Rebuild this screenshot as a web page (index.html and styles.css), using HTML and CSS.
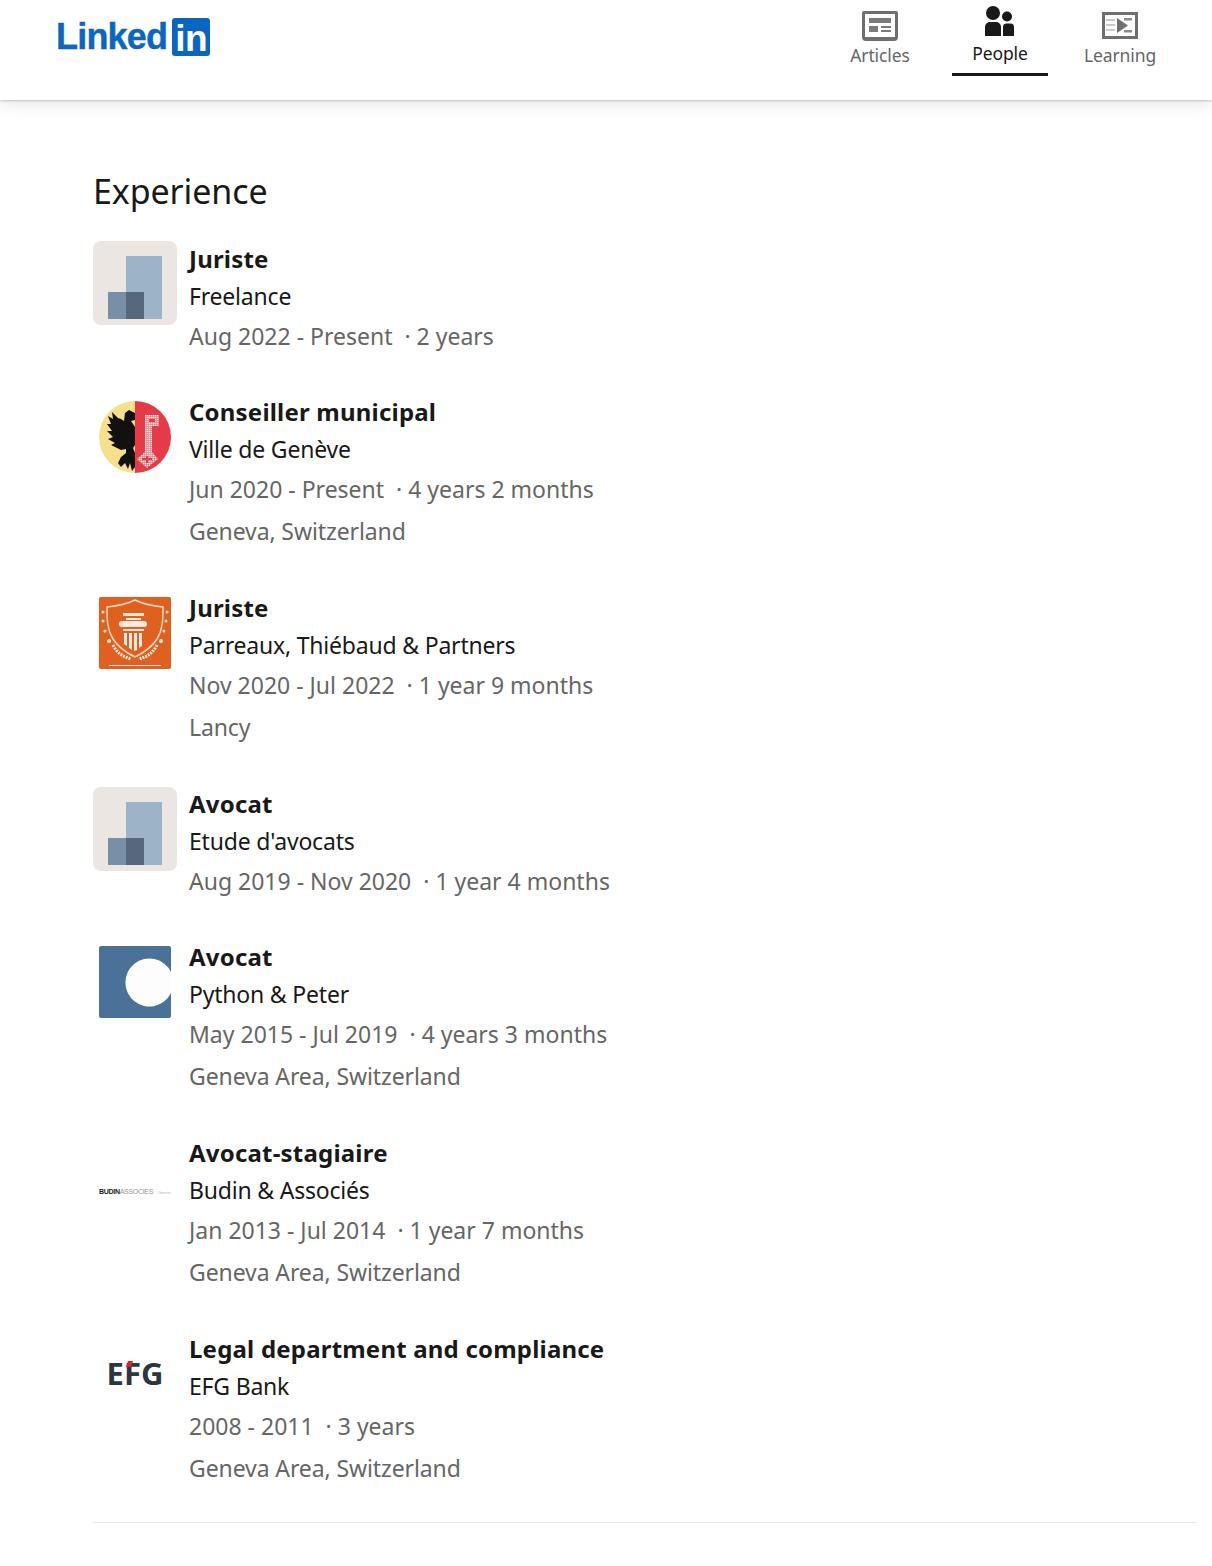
FILE: index.html
```html
<!DOCTYPE html>
<html lang="en">
<head>
  <meta charset="UTF-8">
  <meta name="viewport" content="width=device-width, initial-scale=1.0">
  <title>Experience | LinkedIn</title>
  <link rel="stylesheet" href="styles.css">
</head>
<body>
  <!-- Top nav -->
  <header class="top-bar">
    <a class="brand" href="#">
      <span class="brand-word">Linked</span><span class="brand-box">in</span>
    </a>
    <nav class="top-nav">
      <a class="nav-item" href="#">
        <svg class="nav-icon icon-articles" width="36" height="30" viewBox="0 0 36 30">
          <path fill="#6f6f6f" d="M2 0h32a2 2 0 0 1 2 2v24a4 4 0 0 1-4 4H4a4 4 0 0 1-4-4V2a2 2 0 0 1 2-2z"/>
          <rect x="3" y="3" width="30" height="23" fill="#fff"/>
          <rect x="7" y="7" width="22" height="5" fill="#7a7a7a"/>
          <rect x="7" y="15" width="9" height="6" fill="#7a7a7a"/>
          <rect x="19" y="15" width="10" height="2" fill="#7a7a7a"/>
          <rect x="19" y="19" width="10" height="2" fill="#7a7a7a"/>
        </svg>
        <span>Articles</span>
      </a>
      <a class="nav-item active" href="#">
        <svg class="nav-icon icon-people" width="30" height="30" viewBox="0 0 30 30">
          <circle cx="8" cy="7" r="7" fill="#191919"/>
          <circle cx="22" cy="10.500" r="5" fill="#191919"/>
          <path fill="#191919" d="M0 30V21a5 5 0 0 1 5-5h6a5 5 0 0 1 5 5v9z"/>
          <path fill="#191919" d="M18 30V21a3.500 3.500 0 0 1 3.500-3.500h4A3.500 3.500 0 0 1 29 21v9z"/>
        </svg>
        <span>People</span>
      </a>
      <a class="nav-item" href="#">
        <svg class="nav-icon icon-learning" width="36" height="27" viewBox="0 0 36 27">
          <rect width="36" height="27" fill="#6f6f6f"/>
          <rect x="3" y="3" width="30" height="21" fill="#fff"/>
          <rect x="4" y="7" width="9" height="2" fill="#c9c9c9"/>
          <rect x="4" y="12" width="9" height="2" fill="#c9c9c9"/>
          <rect x="4" y="17" width="9" height="2" fill="#c9c9c9"/>
          <rect x="22" y="6" width="8" height="2.500" fill="#8a8a8a"/>
          <rect x="22" y="18" width="8" height="2.500" fill="#8a8a8a"/>
          <path fill="#6f6f6f" d="M15 6l11 7.500L15 21z"/>
        </svg>
        <span>Learning</span>
      </a>
    </nav>
  </header>

  <main class="content">
    <h2 class="section-title">Experience</h2>

    <!-- Experience list -->
    <ul class="exp-list">
      <li class="exp-item">
        <div class="logo-slot">
          <svg class="logo-placeholder" width="84" height="84" viewBox="0 0 84 84">
            <rect width="84" height="84" rx="8" fill="#ebe6e1"/>
            <rect x="33" y="15" width="36" height="63" fill="#9db3c8"/>
            <rect x="15" y="51" width="36" height="27" fill="#788fa8"/>
            <rect x="33" y="51" width="18" height="27" fill="#56687c"/>
          </svg>
        </div>
        <div class="exp-text">
          <h3>Juriste</h3>
          <p class="company">Freelance</p>
          <p class="dates">Aug 2022 - Present <span class="dur">· 2 years</span></p>
        </div>
      </li>

      <li class="exp-item">
        <div class="logo-slot">
          <svg class="logo" width="72" height="72" viewBox="0 0 72 72">
            <defs>
              <pattern id="key-dots" width="2" height="2" patternUnits="userSpaceOnUse">
                <rect width="1.600" height="1.600" fill="#fdeaea"/>
              </pattern>
            </defs>
            <path fill="#f6e08c" d="M36 0a36 36 0 0 0 0 72z"/>
            <path fill="#e63b46" d="M36 0a36 36 0 0 1 0 72z"/>
            <path fill="#111" d="M30 9L36 12V19L32 20L36 26V44L34 47L36 52V66L33 70L31 62L29 68L26 62L22 66L19 62L22 56L27 52V48L22 49L18 47L12 44L16 42L9 38L14 36L8 30L13 30L8 23L12 23L9 15L14 18L13 11L19 17L22 18L25 20L26 12Z"/>
            <path fill="url(#key-dots)" fill-rule="evenodd" d="M46 14H60V25H53V51L59 58L48 67L38 58L46 51ZM50 18V21H56V18ZM47 55V57H43V59H47V62H49V59H53V57H49V55Z"/>
          </svg>
        </div>
        <div class="exp-text">
          <h3>Conseiller municipal</h3>
          <p class="company">Ville de Genève</p>
          <p class="dates">Jun 2020 - Present <span class="dur">· 4 years 2 months</span></p>
          <p class="place">Geneva, Switzerland</p>
        </div>
      </li>

      <li class="exp-item">
        <div class="logo-slot">
          <svg class="logo" width="72" height="72" viewBox="0 0 72 72">
            <rect width="72" height="72" rx="2" fill="#e0601f"/>
            <path fill="none" stroke="#f7d9c6" stroke-width="1.500" d="M36 3c8 4 18 6 28 7 0 12 0 22-6 32-5 8-12 13-22 18-10-5-17-10-22-18-6-10-6-20-6-32 10-1 20-3 28-7z"/>
            <rect x="24" y="16" width="21" height="3" fill="#fbeadf"/>
            <rect x="27" y="21" width="15" height="2" fill="#fbeadf"/>
            <rect x="20" y="24" width="28" height="6" rx="3" fill="#fbeadf"/>
            <rect x="24" y="32" width="21" height="2" fill="#fbeadf"/>
            <path fill="#fbeadf" d="M25 36h3v13l-3-2zM30 36h3v17l-3-2zM35 36h3v17l-3 1zM40 36h3v13l-3 2z"/>
            <g fill="#fbeadf">
              <circle cx="4" cy="15" r="1.500"/><circle cx="68" cy="15" r="1.500"/>
              <circle cx="4" cy="24" r="1.500"/><circle cx="67" cy="24" r="1.500"/>
              <circle cx="6" cy="34" r="1.500"/><circle cx="65" cy="34" r="1.500"/>
              <circle cx="10" cy="44" r="2"/><circle cx="62" cy="44" r="2"/>
            </g>
            <path fill="none" stroke="#fbeadf" stroke-width="3" stroke-dasharray="2 1" d="M14 48c4 8 10 12 18 14M58 48c-4 8-10 12-18 14"/>
            <rect x="10" y="68" width="52" height="1" fill="#f7d9c6"/>
          </svg>
        </div>
        <div class="exp-text">
          <h3>Juriste</h3>
          <p class="company">Parreaux, Thiébaud &amp; Partners</p>
          <p class="dates">Nov 2020 - Jul 2022 <span class="dur">· 1 year 9 months</span></p>
          <p class="place">Lancy</p>
        </div>
      </li>

      <li class="exp-item">
        <div class="logo-slot">
          <svg class="logo-placeholder" width="84" height="84" viewBox="0 0 84 84">
            <rect width="84" height="84" rx="8" fill="#ebe6e1"/>
            <rect x="33" y="15" width="36" height="63" fill="#9db3c8"/>
            <rect x="15" y="51" width="36" height="27" fill="#788fa8"/>
            <rect x="33" y="51" width="18" height="27" fill="#56687c"/>
          </svg>
        </div>
        <div class="exp-text">
          <h3>Avocat</h3>
          <p class="company">Etude d'avocats</p>
          <p class="dates">Aug 2019 - Nov 2020 <span class="dur">· 1 year 4 months</span></p>
        </div>
      </li>

      <li class="exp-item">
        <div class="logo-slot">
          <svg class="logo" width="72" height="72" viewBox="0 0 72 72">
            <rect width="72" height="72" rx="2" fill="#4a7299"/>
            <path fill="#fdfdfd" d="M72 26a24 24 0 1 0 0 21z"/>
          </svg>
        </div>
        <div class="exp-text">
          <h3>Avocat</h3>
          <p class="company">Python &amp; Peter</p>
          <p class="dates">May 2015 - Jul 2019 <span class="dur">· 4 years 3 months</span></p>
          <p class="place">Geneva Area, Switzerland</p>
        </div>
      </li>

      <li class="exp-item">
        <div class="logo-slot">
          <div class="logo-budin"><b>BUDIN</b>ASSOCIES<i>Geneva</i></div>
        </div>
        <div class="exp-text">
          <h3>Avocat-stagiaire</h3>
          <p class="company">Budin &amp; Associés</p>
          <p class="dates">Jan 2013 - Jul 2014 <span class="dur">· 1 year 7 months</span></p>
          <p class="place">Geneva Area, Switzerland</p>
        </div>
      </li>

      <li class="exp-item">
        <div class="logo-slot">
          <div class="logo-efg">EFG<span class="efg-tick"></span></div>
        </div>
        <div class="exp-text">
          <h3>Legal department and compliance</h3>
          <p class="company">EFG Bank</p>
          <p class="dates">2008 - 2011 <span class="dur">· 3 years</span></p>
          <p class="place">Geneva Area, Switzerland</p>
        </div>
      </li>
    </ul>

    <hr class="rule">
  </main>
</body>
</html>
```
FILE: styles.css
```css
/* General */
html, body {
  margin: 0;
  padding: 0;
}

body {
  font-family: 'Noto Sans', sans-serif;
  background: #fff;
  color: #191919;
  height: 1566px;
  overflow: hidden;
}

a {
  color: inherit;
  text-decoration: none;
}

/* Top bar */
.top-bar {
  height: 100px;
  box-sizing: border-box;
  display: flex;
  justify-content: space-between;
  padding: 0 44px 0 56px;
  background: #fff;
  box-shadow: 0 1px 2px rgba(0, 0, 0, 0.2), 0 4px 16px rgba(0, 0, 0, 0.1);
}

.brand {
  display: flex;
  align-items: center;
  height: 38px;
  margin-top: 18px;
  color: #0a66c2;
  font-family: 'Liberation Sans', sans-serif;
  font-weight: 700;
}

.brand-word {
  font-size: 36px;
  letter-spacing: -0.8px;
  -webkit-text-stroke: 0.4px #0a66c2;
}

.brand-box {
  width: 38px;
  height: 38px;
  margin-left: 5px;
  border-radius: 3px;
  background: #0a66c2;
  color: #fff;
  font-size: 37px;
  line-height: 42px;
  text-align: center;
  letter-spacing: -0.5px;
}

.top-nav {
  display: flex;
  gap: 24px;
}

.nav-item {
  width: 96px;
  height: 76px;
  box-sizing: border-box;
  display: flex;
  flex-direction: column;
  align-items: center;
  justify-content: flex-end;
  padding-bottom: 8px;
  color: #666;
  font-size: 17.5px;
  letter-spacing: -0.1px;
  line-height: 26px;
}

.nav-item.active {
  padding-bottom: 7px;
  color: #191919;
  border-bottom: 3px solid #191919;
}

.nav-icon {
  display: block;
}

.icon-articles {
  margin-bottom: 1px;
}

.icon-people {
  margin-bottom: 4px;
}

.icon-learning {
  margin-bottom: 3px;
}

/* Experience */
.content {
  padding: 66px 15px 0 93px;
}

.section-title {
  margin: 0 0 25px;
  font-size: 34px;
  font-weight: 400;
  letter-spacing: -0.1px;
  line-height: 50px;
}

.exp-list {
  margin: 0;
  padding: 0;
  list-style: none;
}

.exp-item {
  display: flex;
  margin-bottom: 37px;
}

.exp-item:last-child {
  margin-bottom: 32px;
}

.exp-item:nth-child(4) .logo-slot {
  margin-top: 1px;
}

.logo-slot {
  width: 84px;
  height: 84px;
  flex-shrink: 0;
  margin-right: 12px;
  display: flex;
  align-items: center;
  justify-content: center;
}

.logo-placeholder,
.logo {
  display: block;
}

.logo {
  margin-top: 1px;
}

.logo-budin {
  width: 72px;
  margin-top: 30px;
  font-family: 'Liberation Sans', sans-serif;
  font-size: 7px;
  letter-spacing: -0.3px;
  line-height: 10px;
  color: #999;
  white-space: nowrap;
}

.logo-budin b {
  color: #222;
}

.logo-budin i {
  margin-left: 5px;
  font-size: 4px;
  font-style: normal;
  color: #bbb;
}

.logo-efg {
  position: relative;
  font-size: 31px;
  font-weight: 700;
  line-height: 36px;
  color: #2c3640;
}

.efg-tick {
  position: absolute;
  left: 20px;
  top: 6px;
  width: 5px;
  height: 6px;
  background: #d8232a;
  transform: skewX(-20deg);
}

.exp-text h3 {
  margin: 0;
  font-size: 24px;
  font-weight: 700;
  letter-spacing: 0.2px;
  line-height: 36px;
}

.exp-text p {
  margin: 0;
  font-size: 23px;
}

.company {
  letter-spacing: -0.2px;
  line-height: 39px;
}

.dates {
  color: #666;
  line-height: 41px;
}

.dur {
  margin-left: 6px;
}

.place {
  color: #666;
  letter-spacing: -0.1px;
  line-height: 43px;
}

.rule {
  height: 1px;
  margin: 0;
  border: 0;
  background: #e8e8e8;
}
```
